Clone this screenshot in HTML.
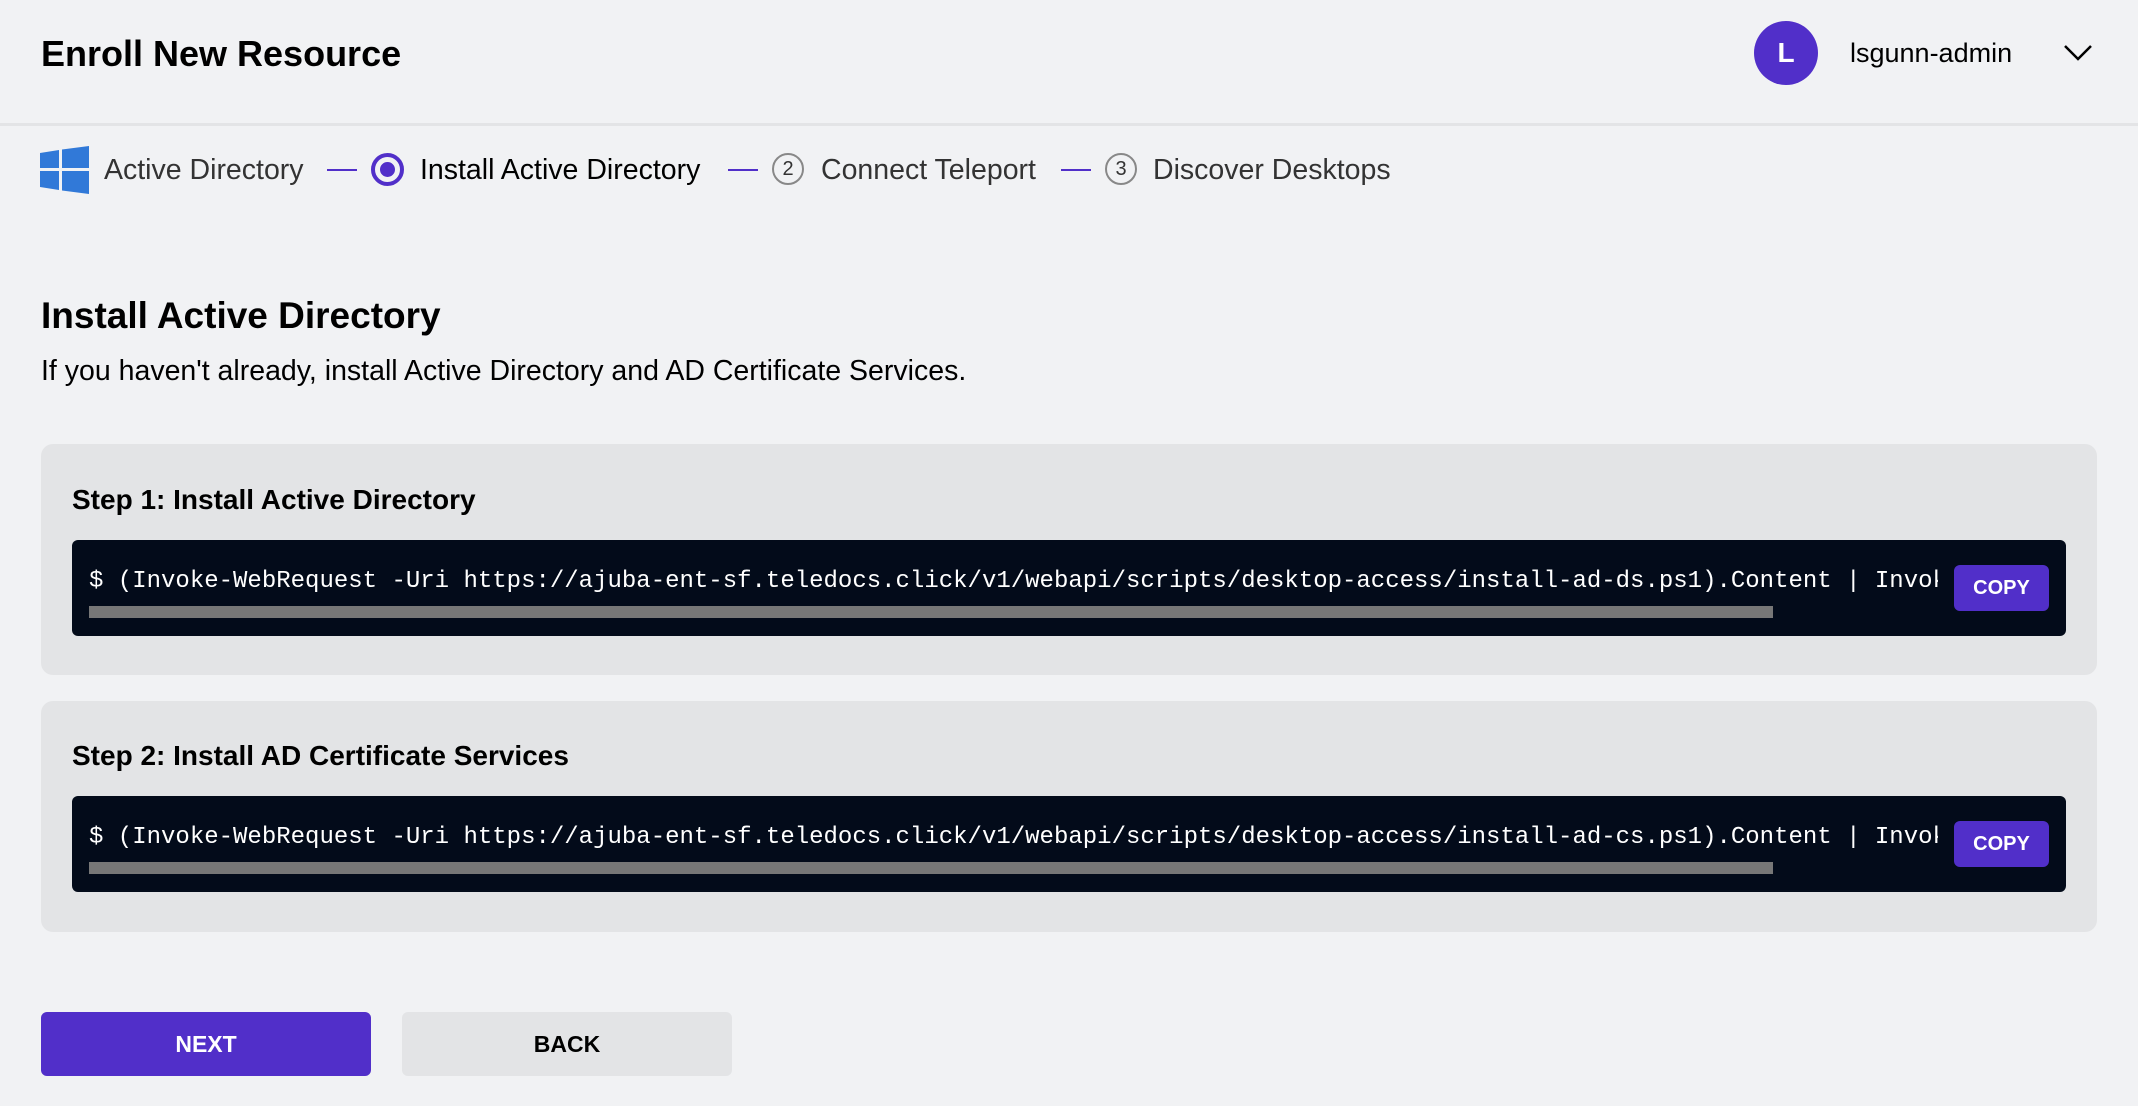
<!DOCTYPE html>
<html><head><meta charset="utf-8"><style>
*{box-sizing:border-box;margin:0;padding:0}
body{width:2138px;height:1106px;background:#f1f2f4;font-family:"Liberation Sans",sans-serif;color:#000;position:relative;overflow:hidden}
.abs{position:absolute;white-space:nowrap}
.hdr{left:41px;top:33px;font-size:36px;font-weight:bold}
.div{left:0;top:123px;width:2138px;height:3px;background:#e3e4e6}
.av{left:1754px;top:21px;width:64px;height:64px;border-radius:50%;background:#512fc9;color:#fff;font-weight:bold;font-size:28px;line-height:64px;text-align:center}
.user{left:1850px;top:38px;font-size:27px;color:#000}
.step{top:154px;font-size:28.5px;color:#333}
.ln{top:169px;width:30px;height:2px;background:#512fc9}
.num{top:153px;width:32px;height:32px;border-radius:50%;border:2px solid #888;font-size:20px;line-height:28px;text-align:center;color:#333}
.card{left:41px;width:2056px;height:231px;background:#e3e4e6;border-radius:12px}
.ct{font-size:28px;font-weight:bold}
.code{left:72px;width:1994px;height:96px;background:#030b1a;border-radius:6px;overflow:hidden}
.code .t{position:absolute;left:17px;top:28px;width:1849px;overflow:hidden;font-family:"Liberation Mono",monospace;font-size:24px;color:#fff;white-space:pre}
.code .sb{position:absolute;left:17px;top:66px;width:1684px;height:12px;background:#777}
.copy{position:absolute;left:1882px;top:25px;width:95px;height:46px;background:#512fc9;border-radius:6px;color:#fff;font-weight:bold;font-size:20px;text-align:center;line-height:46px}
.btn{top:1012px;width:330px;height:64px;border-radius:6px;font-weight:bold;font-size:23px;text-align:center;line-height:64px}
</style></head><body>
<div class="abs hdr">Enroll New Resource</div>
<div class="abs div"></div>
<div class="abs av">L</div>
<div class="abs user">lsgunn-admin</div>
<svg class="abs" style="left:2063px;top:44px" width="30" height="18" viewBox="0 0 30 18"><path d="M2 2 L15 15 L28 2" fill="none" stroke="#000" stroke-width="2.5"/></svg>

<svg class="abs" style="left:40px;top:146px" width="49" height="48" viewBox="0 0 49 48"><path d="M0 7 L19 4 L19 22 L0 22Z M22 3.5 L49 0 L49 22 L22 22Z M0 25 L19 25 L19 44 L0 41Z M22 25 L49 25 L49 48 L22 44.5Z" fill="#3179d8"/></svg>
<div class="abs step" style="left:104px">Active Directory</div>
<div class="abs ln" style="left:327px"></div>
<div class="abs" style="left:371px;top:153px;width:33px;height:33px;border-radius:50%;border:4px solid #512fc9"><div style="margin:5px;width:15px;height:15px;border-radius:50%;background:#512fc9"></div></div>
<div class="abs step" style="left:420px;color:#000">Install Active Directory</div>
<div class="abs ln" style="left:728px"></div>
<div class="abs num" style="left:772px">2</div>
<div class="abs step" style="left:821px">Connect Teleport</div>
<div class="abs ln" style="left:1061px"></div>
<div class="abs num" style="left:1105px">3</div>
<div class="abs step" style="left:1153px">Discover Desktops</div>

<div class="abs" style="left:41px;top:295px;font-size:37px;font-weight:bold">Install Active Directory</div>
<div class="abs" style="left:41px;top:355px;font-size:28.5px">If you haven't already, install Active Directory and AD Certificate Services.</div>

<div class="abs card" style="top:444px"></div>
<div class="abs ct" style="left:72px;top:484px">Step 1: Install Active Directory</div>
<div class="abs code" style="top:540px"><div class="t">$ (Invoke-WebRequest -Uri https://ajuba-ent-sf.teledocs.click/v1/webapi/scripts/desktop-access/install-ad-ds.ps1).Content | Invoke-Expression</div><div class="sb"></div><div class="copy">COPY</div></div>

<div class="abs card" style="top:701px"></div>
<div class="abs ct" style="left:72px;top:740px">Step 2: Install AD Certificate Services</div>
<div class="abs code" style="top:796px"><div class="t">$ (Invoke-WebRequest -Uri https://ajuba-ent-sf.teledocs.click/v1/webapi/scripts/desktop-access/install-ad-cs.ps1).Content | Invoke-Expression</div><div class="sb"></div><div class="copy">COPY</div></div>

<div class="abs btn" style="left:41px;background:#512fc9;color:#fff">NEXT</div>
<div class="abs btn" style="left:402px;background:#e3e4e6;color:#000">BACK</div>
</body></html>
